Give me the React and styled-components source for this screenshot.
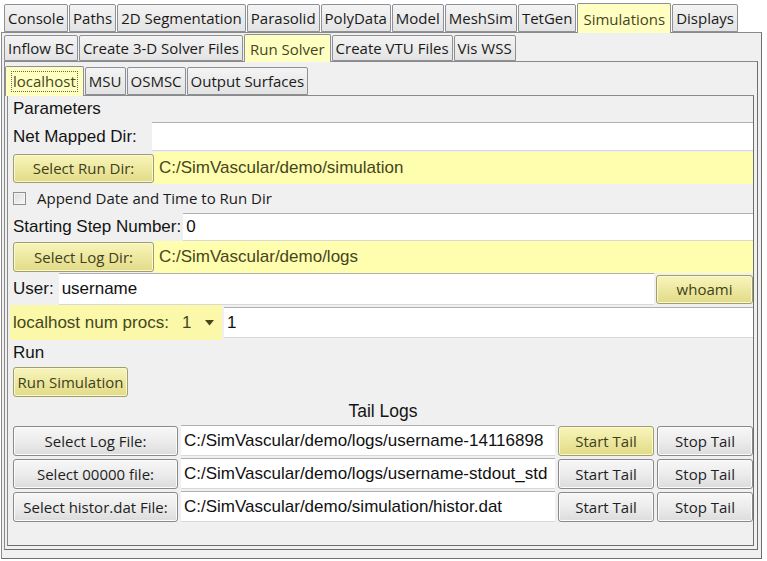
import React from "react";
import styled, { createGlobalStyle } from "styled-components";

const GlobalStyle = createGlobalStyle`
  html, body {
    margin: 0;
    padding: 0;
    background: #ffffff;
  }
  body {
    width: 767px;
    height: 561px;
    overflow: hidden;
  }
  * {
    box-sizing: border-box;
  }
`;

const Window = styled.div`
  width: 767px;
  height: 561px;
  padding: 2px 5px 2px 1px;
  display: flex;
  flex-direction: column;
  font-family: "Open Sans", "Liberation Sans", sans-serif;
  color: #1a1a1a;
`;

// tab strip over a pane
const TabBar = styled.div`
  display: flex;
  align-items: flex-end;
  height: ${(p) => p.$h}px;
  margin-left: ${(p) => p.$indent || 0}px;
  position: relative;
  z-index: 2;
  flex: none;
`;

const Tab = styled.div`
  height: ${(p) => (p.$active ? p.$h + 2 : p.$h)}px;
  margin-bottom: ${(p) => (p.$active ? -1 : 0)}px;
  margin-right: 1px;
  padding: 0 ${(p) => (p.$active ? 5 : 3)}px;
  display: flex;
  align-items: center;
  border: 1px solid #8d9097;
  border-bottom: ${(p) => (p.$active ? "none" : "1px solid #8d9097")};
  border-radius: 2px 2px 0 0;
  background: ${(p) =>
    p.$active ? "#ffffc2" : "linear-gradient(#f4f4f4, #e3e3e3)"};
  color: ${(p) => (p.$active ? "#46461c" : "#1a1a1a")};
  font-size: 15px;
  white-space: nowrap;
`;

const FocusRing = styled.span`
  border: 1px dotted #6b6b3a;
  padding: 0 1px;
  line-height: 19px;
`;

const Pane = styled.div`
  flex: 1;
  display: flex;
  flex-direction: column;
  background: #f0f0f0;
  border: 1px solid #8a8a8a;
  border-right-color: #6e6e6e;
  border-bottom-color: #6e6e6e;
  padding: ${(p) => p.$pad};
  position: relative;
  z-index: 1;
  min-height: 0;
`;

const Row = styled.div`
  display: flex;
  align-items: center;
  height: ${(p) => p.$h}px;
  flex: none;
`;

const Label = styled.div`
  font-family: "Liberation Sans", Arial, sans-serif;
  font-size: 17px;
  color: #141414;
  white-space: nowrap;
  width: ${(p) => (p.$w ? `${p.$w}px` : "auto")};
  flex: none;
`;

const CenterLabel = styled(Label)`
  width: 100%;
  text-align: center;
  font-size: 17.5px;
`;

const Field = styled.div`
  flex: 1;
  align-self: ${(p) => (p.$top ? "flex-start" : "center")};
  height: ${(p) => p.$h}px;
  margin-left: ${(p) => p.$ml || 0}px;
  display: flex;
  align-items: center;
  padding-left: ${(p) => (p.$yellow ? 5 : 3)}px;
  background: ${(p) => (p.$yellow ? "#fffdae" : "#ffffff")};
  border-top: 1px solid ${(p) => (p.$yellow ? "#fffdae" : "#b0b0b0")};
  border-bottom: 1px solid ${(p) => (p.$yellow ? "#fffdae" : "#d8d8d8")};
  font-family: "Liberation Sans", Arial, sans-serif;
  font-size: 17px;
  color: ${(p) => (p.$yellow ? "#46461c" : "#111111")};
  white-space: nowrap;
  overflow: hidden;
  min-width: 0;
`;

const Button = styled.div`
  width: ${(p) => p.$w}px;
  height: ${(p) => p.$h || 30}px;
  margin-left: ${(p) => p.$ml || 0}px;
  flex: none;
  display: flex;
  align-items: center;
  justify-content: center;
  border-radius: 3px;
  border: 1px solid ${(p) => (p.$yellow ? "#a19e6b" : "#8a8a8a")};
  background: ${(p) =>
    p.$yellow
      ? "linear-gradient(#f8f5bb, #ede8a0 50%, #e1db88)"
      : "linear-gradient(#f7f7f7, #ececec 50%, #dcdcdc)"};
  box-shadow: inset 0 0 0 1px ${(p) => (p.$yellow ? "#fbf9d2" : "#fbfbfb")};
  color: ${(p) => (p.$yellow ? "#3f3f1b" : "#1e1e1e")};
  font-size: 15px;
  white-space: nowrap;
`;

const CheckBox = styled.div`
  width: 13px;
  height: 13px;
  border: 1px solid #8e8f8f;
  background: linear-gradient(135deg, #dcdcdc, #f8f8f8);
  box-shadow: inset 0 0 0 1px #f4f4f4;
  margin-right: 11px;
  flex: none;
`;

const CheckText = styled.span`
  font-size: 15px;
  color: #1a1a1a;
`;

const ProcsBox = styled.div`
  display: flex;
  align-items: center;
  height: 35px;
  width: 212px;
  margin-left: -3px;
  padding-left: 3px;
  background: #fbf8a9;
  font-family: "Liberation Sans", Arial, sans-serif;
  font-size: 17px;
  color: #46461c;
  flex: none;
`;

const Combo = styled.div`
  display: flex;
  align-items: center;
  margin-left: 13px;
  gap: 14px;
`;

const TailGrid = styled.div`
  display: grid;
  grid-template-columns: 165px 1fr 96px 96px;
  column-gap: 3px;
  align-items: center;
  height: 33px;
  flex: none;
`;

const Spacer = styled.div`
  flex: 1;
`;

const topTabs = [
  "Console",
  "Paths",
  "2D Segmentation",
  "Parasolid",
  "PolyData",
  "Model",
  "MeshSim",
  "TetGen",
  "Simulations",
  "Displays",
];

const solverTabs = [
  "Inflow BC",
  "Create 3-D Solver Files",
  "Run Solver",
  "Create VTU Files",
  "Vis WSS",
];

const hostTabs = ["localhost", "MSU", "OSMSC", "Output Surfaces"];

const tailRows = [
  { label: "Select Log File:", path: "C:/SimVascular/demo/logs/username-14116898", hot: true },
  { label: "Select 00000 file:", path: "C:/SimVascular/demo/logs/username-stdout_std", hot: false },
  { label: "Select histor.dat File:", path: "C:/SimVascular/demo/simulation/histor.dat", hot: false },
];

const Arrow = () => (
  <svg width="9" height="6" viewBox="0 0 9 6">
    <path d="M0 0 L9 0 L4.5 5.5 Z" fill="#46461c" />
  </svg>
);

export default function App() {
  return (
    <>
      <GlobalStyle />
      <Window>
        <TabBar $h={30} $indent={3}>
          {topTabs.map((t) => (
            <Tab key={t} $h={28} $active={t === "Simulations"}>
              {t}
            </Tab>
          ))}
        </TabBar>
        <Pane $pad="0 3px 8px 2px">
          <TabBar $h={28}>
            {solverTabs.map((t) => (
              <Tab key={t} $h={26} $active={t === "Run Solver"}>
                {t}
              </Tab>
            ))}
          </TabBar>
          <Pane $pad="4px 3px 3px 2px">
            <TabBar $h={29} $indent={-2}>
              {hostTabs.map((t) => (
                <Tab key={t} $h={28} $active={t === "localhost"}>
                  {t === "localhost" ? <FocusRing>{t}</FocusRing> : t}
                </Tab>
              ))}
            </TabBar>
            <Pane $pad="0 0 0 5px">
              <Row $h={26}>
                <Label>Parameters</Label>
              </Row>
              <Row $h={30}>
                <Label $w={139}>Net Mapped Dir:</Label>
                <Field $h={29} $top></Field>
              </Row>
              <Row $h={32}>
                <Button $w={141} $h={29} $yellow>
                  Select Run Dir:
                </Button>
                <Field $h={32} $yellow>
                  C:/SimVascular/demo/simulation
                </Field>
              </Row>
              <Row $h={28}>
                <CheckBox />
                <CheckText>Append Date and Time to Run Dir</CheckText>
              </Row>
              <Row $h={29}>
                <Label>Starting Step Number:</Label>
                <Field $h={28} $ml={2}>
                  0
                </Field>
              </Row>
              <Row $h={32}>
                <Button $w={141} $h={30} $yellow>
                  Select Log Dir:
                </Button>
                <Field $h={32} $yellow>
                  C:/SimVascular/demo/logs
                </Field>
              </Row>
              <Row $h={32}>
                <Label>User:</Label>
                <Field $h={32} $ml={5}>
                  username
                </Field>
                <Button $w={97} $h={29} $ml={2} $yellow>
                  whoami
                </Button>
              </Row>
              <Row $h={35}>
                <ProcsBox>
                  localhost num procs:
                  <Combo>
                    <span>1</span>
                    <Arrow />
                  </Combo>
                </ProcsBox>
                <Field $h={31} $ml={2}>
                  1
                </Field>
              </Row>
              <Row $h={26}>
                <Label>Run</Label>
              </Row>
              <Row $h={32}>
                <Button $w={115} $h={30} $yellow>
                  Run Simulation
                </Button>
              </Row>
              <Row $h={26}>
                <CenterLabel>Tail Logs</CenterLabel>
              </Row>
              {tailRows.map((r) => (
                <TailGrid key={r.label}>
                  <Button $w={165}>{r.label}</Button>
                  <Field $h={31}>{r.path}</Field>
                  <Button $w={96} $yellow={r.hot}>
                    Start Tail
                  </Button>
                  <Button $w={96}>Stop Tail</Button>
                </TailGrid>
              ))}
              <Spacer />
            </Pane>
          </Pane>
        </Pane>
      </Window>
    </>
  );
}
